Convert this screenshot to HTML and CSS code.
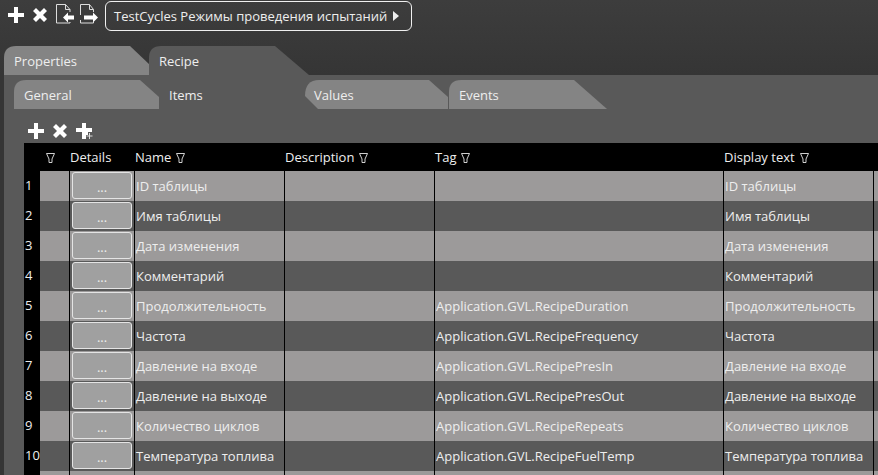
FILE: index.html
```html
<!DOCTYPE html>
<html lang="ru">
<head>
<meta charset="utf-8">
<title>Recipe</title>
<link rel="stylesheet" href="styles.css">
</head>
<body>
<svg class="defs" width="0" height="0" aria-hidden="true">
  <defs>
    <symbol id="plus" viewBox="0 0 16 16"><path d="M6 0h4v6h6v4h-6v6H6v-6H0V6h6z"/></symbol>
    <symbol id="cross" viewBox="0 0 14 14"><path d="M3 0l4 4 4-4 3 3-4 4 4 4-3 3-4-4-4 4-3-3 4-4-4-4z"/></symbol>
    <symbol id="filter" viewBox="0 0 9 10"><path d="M.5.5h8L6 6v3.500H3V6z" fill="none" stroke="#e6e6e6" stroke-width=".9"/></symbol>
  </defs>
</svg>
<header class="topbar">
  <svg class="ic ic-plus"><use href="#plus"/></svg>
  <svg class="ic ic-cross"><use href="#cross"/></svg>
  <svg class="ic-doc" viewBox="0 0 18 20"><path d="M14 8V5.500L9.500.5H.5v18.500H14v-1M9.500.5v5H14" fill="none" stroke="#ddd"/><path d="M7 13.500l5-5v3h6v4h-6v3z" fill="#fff"/></svg>
  <svg class="ic-doc ic-doc2" viewBox="0 0 18 20"><path d="M.5 11V.5h9l4 5V8M13.500 18v1H.5V16M9.500.5v5h4" fill="none" stroke="#ddd"/><path d="M18 13.500l-5-5v3H4v4h9v3z" fill="#fff"/></svg>
  <button class="crumb">TestCycles Режимы проведения испытаний<span class="crumb-arrow"></span></button>
</header>

<nav class="tabs">
  <div class="tab tab-props">Properties</div>
  <div class="tab tab-recipe">Recipe</div>
</nav>

<main class="panel">
  <nav class="subtabs">
    <div class="sub sub-general">General</div>
    <div class="sub sub-items">Items</div>
    <div class="sub sub-values">Values</div>
    <div class="sub sub-events">Events</div>
  </nav>
  <div class="tools">
    <svg class="ic ic-plus"><use href="#plus"/></svg>
    <svg class="ic ic-cross"><use href="#cross"/></svg>
    <svg class="ic-addrow" viewBox="0 0 18 17"><path d="M6 0h4v5h6v4h-4v3h-2v4H6V9H0V5h6z" fill="#fff"/><path d="M13.500 10v6M10.500 13h6" stroke="#ddd" fill="none"/></svg>
  </div>
  <div class="table">
    <div class="row head">
      <div class="rh"></div>
      <div class="hc"><svg class="flt"><use href="#filter"/></svg></div>
      <div class="hc">Details</div>
      <div class="hc">Name<svg class="flt"><use href="#filter"/></svg></div>
      <div class="hc">Description<svg class="flt"><use href="#filter"/></svg></div>
      <div class="hc">Tag<svg class="flt"><use href="#filter"/></svg></div>
      <div class="hc">Display text<svg class="flt"><use href="#filter"/></svg></div>
      <div class="hc"></div>
    </div>
    <div class="row"><div class="rh">1</div><div class="c first"></div><div class="c"><button class="dots">...</button></div><div class="c">ID таблицы</div><div class="c"></div><div class="c"></div><div class="c">ID таблицы</div><div class="c"></div></div>
    <div class="row"><div class="rh">2</div><div class="c first"></div><div class="c"><button class="dots">...</button></div><div class="c">Имя таблицы</div><div class="c"></div><div class="c"></div><div class="c">Имя таблицы</div><div class="c"></div></div>
    <div class="row"><div class="rh">3</div><div class="c first"></div><div class="c"><button class="dots">...</button></div><div class="c">Дата изменения</div><div class="c"></div><div class="c"></div><div class="c">Дата изменения</div><div class="c"></div></div>
    <div class="row"><div class="rh">4</div><div class="c first"></div><div class="c"><button class="dots">...</button></div><div class="c">Комментарий</div><div class="c"></div><div class="c"></div><div class="c">Комментарий</div><div class="c"></div></div>
    <div class="row"><div class="rh">5</div><div class="c first"></div><div class="c"><button class="dots">...</button></div><div class="c">Продолжительность</div><div class="c"></div><div class="c">Application.GVL.RecipeDuration</div><div class="c">Продолжительность</div><div class="c"></div></div>
    <div class="row"><div class="rh">6</div><div class="c first"></div><div class="c"><button class="dots">...</button></div><div class="c">Частота</div><div class="c"></div><div class="c">Application.GVL.RecipeFrequency</div><div class="c">Частота</div><div class="c"></div></div>
    <div class="row"><div class="rh">7</div><div class="c first"></div><div class="c"><button class="dots">...</button></div><div class="c">Давление на входе</div><div class="c"></div><div class="c">Application.GVL.RecipePresIn</div><div class="c">Давление на входе</div><div class="c"></div></div>
    <div class="row"><div class="rh">8</div><div class="c first"></div><div class="c"><button class="dots">...</button></div><div class="c">Давление на выходе</div><div class="c"></div><div class="c">Application.GVL.RecipePresOut</div><div class="c">Давление на выходе</div><div class="c"></div></div>
    <div class="row"><div class="rh">9</div><div class="c first"></div><div class="c"><button class="dots">...</button></div><div class="c">Количество циклов</div><div class="c"></div><div class="c">Application.GVL.RecipeRepeats</div><div class="c">Количество циклов</div><div class="c"></div></div>
    <div class="row"><div class="rh">10</div><div class="c first"></div><div class="c"><button class="dots">...</button></div><div class="c">Температура топлива</div><div class="c"></div><div class="c">Application.GVL.RecipeFuelTemp</div><div class="c">Температура топлива</div><div class="c"></div></div>
    <div class="row row-clipped"><div class="rh"></div><div class="c first"></div><div class="c"></div><div class="c"></div><div class="c"></div><div class="c"></div><div class="c"></div><div class="c"></div></div>
  </div>
</main>
</body>
</html>
```
FILE: styles.css
```css
* { box-sizing: border-box; }
html, body { height: 100%; }
body {
  margin: 0;
  padding-left: 4px;
  height: 475px;
  overflow: hidden;
  display: flex;
  flex-direction: column;
  background: linear-gradient(#3d3d3d, #353535 75px);
  color: #eee;
  font: 13px/16px "Open Sans", "Noto Sans", sans-serif;
}
.defs { position: absolute; }
.topbar { height: 46px; flex: none; display: flex; align-items: flex-start; }
.ic { fill: #fff; display: block; }
.ic-plus { width: 16px; height: 16px; }
.ic-cross { width: 14px; height: 14px; }
.topbar .ic-plus { margin: 7px 0 0 4px; }
.topbar .ic-cross { margin: 8px 0 0 9px; }
.ic-doc { width: 18px; height: 20px; margin: 4px 0 0 9px; flex: none; }
.ic-doc2 { margin-left: 6px; }
.crumb {
  margin: 1px 0 0 7px;
  width: 307px;
  height: 30px;
  padding: 0 0 0 8px;
  display: flex;
  align-items: center;
  background: transparent;
  border: 1px solid #f0f0f0;
  border-radius: 6px;
  color: #eee;
  font: inherit;
}
.crumb-arrow {
  margin-left: 6px;
  border-left: 6px solid #eee;
  border-top: 5px solid transparent;
  border-bottom: 5px solid transparent;
}
.tabs { height: 29px; display: flex; flex: none; }
.tab { height: 29px; padding: 7px 0 0 10px; flex: none; }
.tab-props {
  width: 146px;
  background: #848484;
  clip-path: path("M0 29V12Q0 0 12 0H126L146 19V29Z");
}
.tab-recipe {
  width: 160px;
  margin-left: -1px;
  background: #595959;
  clip-path: path("M0 29V12Q0 0 12 0H126L160 29Z");
}
.panel { flex: 1; background: #595959; min-height: 0; overflow: hidden; }
.subtabs { height: 45px; padding: 5px 0 0 10px; display: flex; }
.sub { height: 29px; padding-top: 7px; flex: none; }
.sub-general {
  width: 145px;
  padding-left: 10px;
  background: #848484;
  clip-path: path("M0 29V12Q0 0 12 0H126L145 17V29Z");
}
.sub-items { width: 146px; padding-left: 10px; }
.sub-values {
  width: 144px;
  padding-left: 9px;
  background: #848484;
  clip-path: path("M0 16Q0 0 14 0H124L143 17V29H13Z");
}
.sub-events {
  width: 158px;
  padding-left: 10px;
  background: #848484;
  clip-path: path("M0 29V12Q0 0 12 0H125L158 29Z");
}
.tools { height: 23px; margin-left: 20px; padding: 3px 0 0 4px; display: flex; align-items: flex-start; }
.tools .ic-cross { margin: 1px 0 0 9px; }
.ic-addrow { width: 18px; height: 17px; margin-left: 9px; }
.table { margin-left: 20px; }
.row {
  display: grid;
  grid-template-columns: 16px 29px 65px 150px 150px 289px 150px 1fr;
  height: 30px;
}
.row:nth-child(even) { background: #9c9a9a; }
.row:nth-child(odd) { background: #595959; }
.row.head { height: 28px; background: #000; }
.row-clipped { height: 4px; overflow: hidden; }
.rh { background: #000; padding: 6px 0 0 1px; white-space: nowrap; }
.hc { padding: 6px 0 0 1px; display: flex; align-items: flex-start; white-space: nowrap; }
.flt { width: 9px; height: 10px; margin: 4px 0 0 5px; flex: none; }
.c { border-left: 1px solid #000; padding: 7px 0 0 1px; white-space: nowrap; overflow: hidden; }
.c.first { border-left: 0; }
.c:has(.dots) { padding: 1px 0 0 2px; }
.dots {
  display: block;
  width: 60px;
  height: 27px;
  padding: 2px 0 0;
  background: #a0a0a0;
  border: 1px solid #e4e4e4;
  border-radius: 3px;
  color: #eee;
  font: inherit;
}
```
